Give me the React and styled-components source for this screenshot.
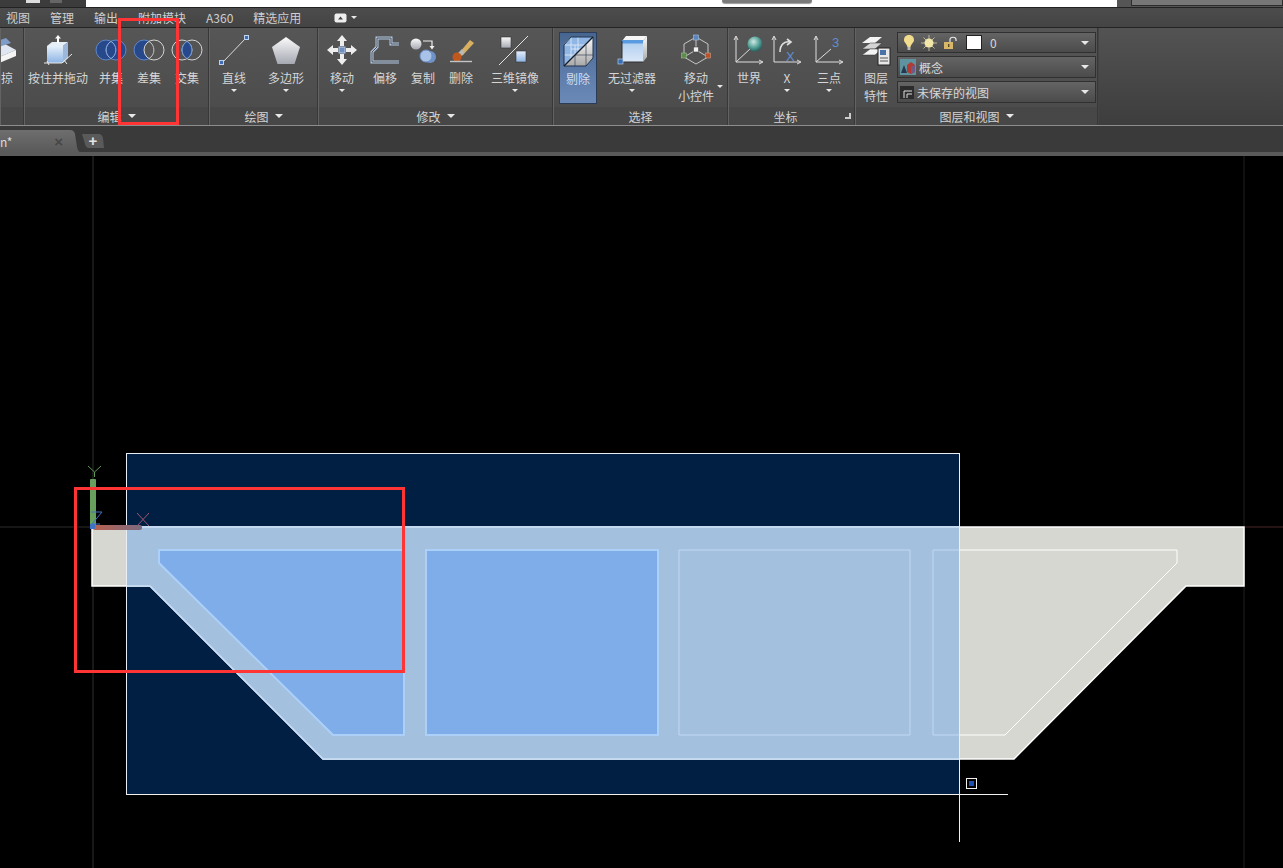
import React from "react";
import styled, { createGlobalStyle } from "styled-components";

const GlobalStyle = createGlobalStyle`
  html, body {
    margin: 0;
    padding: 0;
    background: #000;
  }
  body {
    font-family: "Noto Sans CJK SC", "Liberation Sans", sans-serif;
    font-size: 12px;
    color: #d8d8d8;
  }
`;

const Page = styled.div`
  position: relative;
  display: flex;
  flex-direction: column;
  width: 1283px;
  height: 868px;
  overflow: hidden;
`;

const TitleBar = styled.div`
  display: flex;
  height: 7px;
  background: #3c3c3c;
  border-bottom: 1px solid #222;
`;

const TitleStub = styled.div`
  width: 86px;
  display: flex;
  gap: 10px;
  padding-left: 26px;
  box-sizing: border-box;
`;

const StubBlock = styled.div`
  width: ${(p) => p.$w}px;
  height: 3px;
  background: ${(p) => p.$c};
`;

const TitleWhite = styled.div`
  width: 1031px;
  background: #fff;
  position: relative;
`;

const SearchTab = styled.div`
  position: absolute;
  left: 636px;
  top: 0;
  width: 90px;
  height: 3px;
  background: #7a7a7a;
  border-radius: 0 0 5px 5px;
  box-shadow: 0 1px 1px #999;
`;

const TitleRight = styled.div`
  flex: 1;
  padding-left: 14px;
  background: #555;
`;

const SearchBox = styled.div`
  height: 5px;
  background: #777;
  border: 1px solid #2c2c2c;
  border-top: 0;
`;

const MenuBar = styled.div`
  display: flex;
  align-items: center;
  gap: 20px;
  height: 19px;
  padding-left: 6px;
  background: linear-gradient(#4c4c4c, #444);
  border-bottom: 1px solid #242424;
  color: #cfcfcf;
  white-space: nowrap;
`;

const MenuItem = styled.span`
  line-height: 19px;
`;

const MenuExtra = styled.span`
  display: flex;
  align-items: center;
  gap: 4px;
  margin-left: 13px;
`;

const Ribbon = styled.div`
  display: flex;
  height: 97px;
  background: linear-gradient(#535353, #3d3d3d);
`;

const Panel = styled.section`
  display: flex;
  flex-direction: column;
  width: ${(p) => p.$w}px;
  flex: none;
  overflow: hidden;
  background: linear-gradient(#565656, #4a4a4a);
  border-right: 1px solid #383838;
  border-left: 1px solid #636363;
  box-sizing: border-box;
`;

const PanelBody = styled.div`
  display: flex;
  height: 79px;
  margin-left: -1px;
  padding-left: ${(p) => p.$pad || 0}px;
`;

const PanelTitle = styled.div`
  position: relative;
  display: flex;
  align-items: center;
  justify-content: center;
  gap: 6px;
  height: 18px;
  padding-right: ${(p) => p.$right || 0}px;
  background: #474747;
  color: #d4d4d4;
  white-space: nowrap;
`;

const Launcher = styled.span`
  position: absolute;
  right: 3px;
  top: 6px;
  width: 6px;
  height: 6px;
  border-right: 2px solid #ccc;
  border-bottom: 2px solid #ccc;
  box-sizing: border-box;
`;

const Tool = styled.div`
  flex: none;
  position: relative;
  display: flex;
  flex-direction: column;
  align-items: center;
  width: ${(p) => p.$w}px;
  margin-left: ${(p) => p.$shift || 0}px;
  padding-top: 6px;
  box-sizing: border-box;
  color: #d6d6d6;
  white-space: nowrap;
`;

const ActiveTool = styled(Tool)`
  margin-top: 4px;
  height: 72px;
  padding-top: 2px;
  background: linear-gradient(#47668f, #5c7ba8 55%, #6c8ab8);
  border: 1px solid #2c3c58;
  color: #cfdcf0;
`;

const IconBox = styled.div`
  height: 32px;
  width: 34px;
  display: flex;
  align-items: center;
  justify-content: center;
  flex: none;
`;

const ToolLabel = styled.div`
  height: 18px;
  line-height: 18px;
  margin-top: 3px;
`;

const ToolLabelSecond = styled.div`
  height: 18px;
  line-height: 18px;
`;

const Caret = styled.span`
  display: block;
  flex: none;
  width: 0;
  height: 0;
  border-left: ${(p) => p.$size || 3}px solid transparent;
  border-right: ${(p) => p.$size || 3}px solid transparent;
  border-top: ${(p) => p.$size || 3}px solid #e8e8e8;
  margin-top: ${(p) => p.$top || 0}px;
`;

const SideCaret = styled(Caret)`
  position: absolute;
  right: 2px;
  top: 57px;
`;

const RibbonRest = styled.div`
  flex: 1;
  border-left: 1px solid #444;
`;

const LayerStack = styled.div`
  display: flex;
  flex-direction: column;
  gap: 3px;
  width: 199px;
  padding-top: 4px;
`;

const LayerRow = styled.div`
  display: flex;
  align-items: center;
  gap: ${(p) => p.$gap || 3}px;
  padding: 0 6px 0 ${(p) => p.$pad || 2}px;
  background: linear-gradient(#646464, #4b4b4b);
  border: 1px solid #303030;
  color: #d8d8d8;
  height: ${(p) => p.$h || 20}px;
`;

const RowText = styled.span`
  flex: 1;
  white-space: nowrap;
`;

const Swatch = styled.span`
  width: 14px;
  height: 13px;
  background: #fff;
  border: 1px solid #222;
  margin-left: 2px;
  margin-right: 2px;
`;

const TabBar = styled.div`
  display: flex;
  align-items: flex-end;
  height: 26px;
  background: #3a3a3a;
  border-top: 1px solid #8d8d8d;
`;

const DocTab = styled.div`
  display: flex;
  align-items: center;
  justify-content: space-between;
  width: 80px;
  height: 22px;
  padding-right: 17px;
  box-sizing: border-box;
  background: linear-gradient(#6e6e6e, #5a5a5a);
  clip-path: path("M0 0 L70 0 Q74 0 75 4 L77 17 Q78 22 80 22 L0 22 Z");
  color: #dcdcdc;
`;

const TabClose = styled.span`
  color: #474747;
  font-family: "Liberation Sans", sans-serif;
  font-size: 15px;
  font-weight: bold;
  line-height: 1;
`;

const NewTab = styled.div`
  width: 22px;
  height: 14px;
  margin: 0 0 4px 2px;
  background: #5a5a5a;
  clip-path: path("M0 0 L17 0 Q20 0 21 4 L22 14 L7 14 Q4 14 3 10 Z");
  color: #e4e4e4;
  font-family: "Liberation Sans", sans-serif;
  font-size: 15px;
  font-weight: bold;
  line-height: 14px;
  text-align: center;
`;

const TabFoot = styled.div`
  height: 4px;
  background: #5a5a5a;
`;

const Canvas = styled.div`
  flex: 1;
  background: #000;
`;

const CanvasSvg = styled.svg`
  display: block;
`;

const Defs = styled.svg`
  position: absolute;
  width: 0;
  height: 0;
`;

const Callout = styled.div`
  position: absolute;
  left: ${(p) => p.$x}px;
  top: ${(p) => p.$y}px;
  width: ${(p) => p.$w}px;
  height: ${(p) => p.$h}px;
  border: 3px solid #ff3535;
  box-sizing: border-box;
  pointer-events: none;
`;

const GradientDefs = () => (
  <Defs aria-hidden="true">
    <defs>
      <linearGradient id="paleBlue" x1="0" y1="0" x2="0" y2="1">
        <stop offset="0" stopColor="#e6f0fb" />
        <stop offset="1" stopColor="#8db4e4" />
      </linearGradient>
      <linearGradient id="blueDown" x1="0" y1="0" x2="0" y2="1">
        <stop offset="0" stopColor="#aecdf0" />
        <stop offset="1" stopColor="#dbe8f7" />
      </linearGradient>
      <linearGradient id="whiteGrey" x1="0" y1="0" x2="0" y2="1">
        <stop offset="0" stopColor="#fbfbfb" />
        <stop offset="1" stopColor="#a6a8b2" />
      </linearGradient>
      <linearGradient id="sideGrey" x1="0" y1="0" x2="0" y2="1">
        <stop offset="0" stopColor="#fafafa" />
        <stop offset="1" stopColor="#a8a8a8" />
      </linearGradient>
      <linearGradient id="xAxis" x1="0" y1="0" x2="1" y2="0">
        <stop offset="0" stopColor="#b8604e" />
        <stop offset="1" stopColor="#7c6c80" />
      </linearGradient>
      <radialGradient id="globe" cx="0.4" cy="0.35" r="0.7">
        <stop offset="0" stopColor="#cfe9e6" />
        <stop offset="0.6" stopColor="#4f9c92" />
        <stop offset="1" stopColor="#22565a" />
      </radialGradient>
    </defs>
  </Defs>
);

const Icon = ({ w = 32, h = 32, children }) => (
  <svg width={w} height={h} viewBox={`0 0 ${w} ${h}`}>
    {children}
  </svg>
);

const SweepIcon = () => (
  <Icon>
    <path d="M3 16 L20 10 L31 16 L14 23 Z" fill="#dfe6f2" />
    <path d="M3 16 L14 23 L14 29 L3 22 Z" fill="#8ea6cc" />
    <path d="M14 23 L31 16 L31 22 L14 29 Z" fill="#f4f4f4" />
    <path d="M9 8 L21 4 L26 9 L14 13 Z" fill="#7f9bc8" />
  </Icon>
);

const PressPullIcon = () => (
  <Icon w={30}>
    <path d="M4 12 L20 12 L20 29 L4 29 Z" fill="url(#paleBlue)" />
    <path d="M4 12 L9 8 L25 8 L20 12 Z" fill="#e6eef8" />
    <path d="M20 12 L25 8 L25 24 L20 29 Z" fill="#9db7da" />
    <path d="M15 9 L15 3" stroke="#fff" strokeWidth="2" />
    <path d="M12 4.5 L15 1 L18 4.5 Z" fill="#fff" />
    <path d="M1 29 L19 29 L29 20 M4 27 L6 31 M21 26 L24 30" stroke="#e8e8e8" strokeWidth="1" fill="none" />
  </Icon>
);

const UnionIcon = () => (
  <Icon w={32} h={24}>
    <circle cx="11" cy="12" r="10" fill="#27498c" stroke="#5c86c8" />
    <circle cx="21" cy="12" r="10" fill="#27498c" stroke="#5c86c8" />
    <path d="M16 3.4 A10 10 0 0 1 16 20.6 A10 10 0 0 1 16 3.4 Z" fill="#27498c" stroke="#8fb0e0" />
  </Icon>
);

const SubtractIcon = () => (
  <Icon w={32} h={24}>
    <circle cx="11" cy="12" r="10" fill="#27498c" stroke="#5c86c8" />
    <circle cx="21" cy="12" r="10" fill="#555" stroke="#d4d4d4" />
    <path d="M16 3.4 A10 10 0 0 1 16 20.6" fill="none" stroke="#c4c4c4" />
  </Icon>
);

const IntersectIcon = () => (
  <Icon w={32} h={24}>
    <circle cx="11" cy="12" r="10" fill="none" stroke="#d4d4d4" />
    <circle cx="21" cy="12" r="10" fill="none" stroke="#d4d4d4" />
    <path d="M16 3.4 A10 10 0 0 1 16 20.6 A10 10 0 0 1 16 3.4 Z" fill="#27498c" stroke="#6f96d4" />
  </Icon>
);

const LineIcon = () => (
  <Icon>
    <path d="M4 29 L28 4" stroke="#dcdcdc" strokeWidth="1" />
    <rect x="1.5" y="26.5" width="4" height="4" fill="#3f6db4" stroke="#bcd2f0" />
    <rect x="26.5" y="1.5" width="4" height="4" fill="#3f6db4" stroke="#bcd2f0" />
  </Icon>
);

const PolygonIcon = () => (
  <Icon>
    <path d="M16 3 L30 13 L24.5 30 L7.5 30 L2 13 Z" fill="url(#whiteGrey)" />
  </Icon>
);

const MoveIcon = () => (
  <Icon>
    <path
      d="M16 1 L21 7 L18 7 L18 12 L14 12 L14 7 L11 7 Z M16 31 L21 25 L18 25 L18 20 L14 20 L14 25 L11 25 Z M1 16 L7 11 L7 14 L12 14 L12 18 L7 18 L7 21 Z M31 16 L25 11 L25 14 L20 14 L20 18 L25 18 L25 21 Z"
      fill="#eeeeee"
    />
    <rect x="13" y="13" width="6" height="6" fill="#6f8fc0" stroke="#b9cbe6" />
  </Icon>
);

const OFFSET_PATH = "M30 28 L3 28 L3 18 L8 13 L8 4 L22 4 L22 10 L30 10";

const OffsetIcon = () => (
  <Icon>
    <path d={OFFSET_PATH} fill="none" stroke="#b4cae8" strokeWidth="3" />
    <path d={OFFSET_PATH} fill="none" stroke="#525252" strokeWidth="1" />
  </Icon>
);

const CopyIcon = () => (
  <Icon>
    <circle cx="9" cy="10" r="5.5" fill="url(#whiteGrey)" />
    <circle cx="23" cy="23" r="6" fill="#6f92c8" />
    <circle cx="19" cy="22" r="6" fill="#a9c3e8" stroke="#6f92c8" />
    <path d="M16 7 L25 7 L25 14" fill="none" stroke="#f0f0f0" strokeWidth="1.2" />
    <path d="M22.5 12 L27.5 12 L25 15.5 Z" fill="#f0f0f0" />
  </Icon>
);

const EraseIcon = () => (
  <Icon>
    <path d="M25 6 L29 9 L18 21 L15 18 Z" fill="#d8b060" />
    <path d="M17 15 L20 18 L17 22 L13 19 Z" fill="#b8b8b0" />
    <circle cx="12" cy="23" r="4.5" fill="#c0581e" />
    <path d="M5 27.5 L27 27.5" stroke="#c4c4c4" strokeWidth="1.4" />
  </Icon>
);

const MirrorIcon = () => (
  <Icon>
    <rect x="2" y="3" width="10" height="11" fill="url(#whiteGrey)" stroke="#333" strokeWidth="0.6" />
    <path d="M0 31 L29 2" stroke="#e2e2e2" strokeWidth="1" />
    <rect x="17" y="17" width="10" height="11" fill="url(#paleBlue)" stroke="#333" strokeWidth="0.6" />
  </Icon>
);

const CullIcon = () => (
  <Icon>
    <path d="M2 10 L9 2 L31 2 L31 23 L24 31 L2 31 Z" fill="#8fb6e4" />
    <path d="M31 2 L31 23 L24 31 L2 31 Z" fill="url(#sideGrey)" />
    <path
      d="M2 10 L24 10 L31 2 M2 20 L14 20 M9 2 L9 24 M16 2 L16 17 M13 10 L13 20 M9 14 L24 14 M2 10 L9 2"
      fill="none"
      stroke="#e4edf8"
      strokeWidth="0.8"
    />
    <path d="M24 10 L24 31 M13 20 L13 31 M13 20 L31 20" fill="none" stroke="#3c4656" strokeWidth="0.7" />
    <path d="M2 10 L9 2 L31 2 L31 23 L24 31 L2 31 Z" fill="none" stroke="#22344e" />
    <path d="M2 31 L31 2" stroke="#141c28" strokeWidth="1.2" />
  </Icon>
);

const FilterIcon = () => (
  <Icon>
    <path d="M6 7 L27 7 L27 28 L6 28 Z" fill="url(#blueDown)" />
    <path d="M6 7 L10 2 L31 2 L27 7 Z" fill="#f6f6f6" />
    <path d="M27 7 L31 2 L31 23 L27 28 Z" fill="url(#sideGrey)" />
    <rect x="6" y="6" width="21" height="3.5" fill="#5a9ae0" />
    <path d="M6 28 L6 7" stroke="#2e2e2e" />
    <path d="M6 28 L27 28" stroke="#2e2e2e" />
    <rect x="2" y="25" width="5" height="5" fill="#3a6cb0" stroke="#c4d6ee" strokeWidth="0.6" />
  </Icon>
);

const GizmoIcon = () => (
  <Icon>
    <path d="M16 3 L28 10 L28 23 L16 30 L4 23 L4 10 Z" fill="none" stroke="#c6c6c6" />
    <path d="M16 3 L16 16 L4 23 M16 16 L28 23" fill="none" stroke="#c6c6c6" />
    <rect x="13.5" y="1" width="5" height="5" fill="#5b86bd" stroke="#a8c0de" strokeWidth="0.6" />
    <rect x="13.5" y="13" width="5" height="5" fill="#f2f2f2" stroke="#444" strokeWidth="0.6" />
    <rect x="1.5" y="19" width="5" height="5" fill="#5e8c4e" stroke="#9abf8c" strokeWidth="0.6" />
    <rect x="25.5" y="19" width="5" height="5" fill="#b5532e" stroke="#d29a80" strokeWidth="0.6" />
  </Icon>
);

const Axes = () => (
  <path
    d="M3 28 L3 3 M1 6 L3 2 L5 6 M3 28 L29 28 M26 26 L30 28 L26 30"
    fill="none"
    stroke="#dedede"
    strokeWidth="1"
  />
);

const WorldIcon = () => (
  <Icon>
    <Axes />
    <path d="M3 28 L18 14" stroke="#dedede" />
    <circle cx="22" cy="10" r="7.5" fill="url(#globe)" />
  </Icon>
);

const AxisXIcon = () => (
  <Icon>
    <Axes />
    <path d="M9 18 C9 10 14 7 19 8 M16 5 L20 8 L16 11" fill="none" stroke="#dedede" strokeWidth="1.6" />
    <text x="15" y="27" fill="#5f8fd6" fontSize="13" fontFamily="Liberation Sans, sans-serif">
      X
    </text>
  </Icon>
);

const ThreePointIcon = () => (
  <Icon>
    <Axes />
    <path d="M3 28 L18 15" stroke="#dedede" />
    <text x="19" y="13" fill="#5f8fd6" fontSize="13" fontFamily="Liberation Sans, sans-serif">
      3
    </text>
  </Icon>
);

const LayersIcon = () => (
  <Icon>
    <path d="M2 9 L10 3 L22 3 L15 9 Z" fill="#f4f4f4" />
    <path d="M2 15 L10 9 L22 9 L15 15 Z" fill="#d4d4d4" stroke="#333" strokeWidth="0.5" />
    <path d="M2 21 L10 15 L22 15 L15 21 Z" fill="#f4f4f4" stroke="#333" strokeWidth="0.5" />
    <rect x="18" y="14" width="12" height="17" fill="#e8e8e8" stroke="#222" />
    <rect x="20" y="16" width="6" height="5" fill="#4a72aa" />
    <path d="M20 24 L28 24 M20 27 L28 27" stroke="#555" />
  </Icon>
);

const BulbIcon = () => (
  <Icon w={12} h={17}>
    <path d="M6 1 C9.5 1 11 3.5 11 6 C11 8.5 8 10 7.5 13 L4.5 13 C4 10 1 8.5 1 6 C1 3.5 2.5 1 6 1 Z" fill="#f0dc8c" />
    <rect x="4.5" y="13" width="3" height="3" fill="#b8b8b8" />
  </Icon>
);

const SunIcon = () => (
  <Icon w={16} h={16}>
    <path d="M8 0 L8 16 M0 8 L16 8 M2.5 2.5 L13.5 13.5 M13.5 2.5 L2.5 13.5" stroke="#d8d0a8" strokeWidth="0.8" />
    <circle cx="8" cy="8" r="4.5" fill="#f2e6a8" />
  </Icon>
);

const LockIcon = () => (
  <Icon w={15} h={14}>
    <path d="M7 6 L7 3.5 C7 0.5 13 0.5 13 3.5 L13 5" fill="none" stroke="#e8e8e8" strokeWidth="1.2" />
    <rect x="1" y="6" width="9" height="7" fill="#d8b66a" />
    <rect x="5" y="8" width="1.4" height="3" fill="#5a4a20" />
  </Icon>
);

const StyleIcon = () => (
  <Icon w={16} h={16}>
    <rect width="16" height="16" fill="#5f93a0" />
    <path d="M1 14 L4 6 L7 14 Z" fill="#27384e" />
    <path d="M7 6 L11 3 L15 6 L15 13 L11 15 L7 13 Z" fill="#b23a34" />
    <path d="M11 8 L15 6 L15 13 L11 15 Z" fill="#6d5a86" />
  </Icon>
);

const ViewIcon = () => (
  <Icon w={14} h={13}>
    <rect width="14" height="13" fill="#2c2c2c" />
    <path d="M4 12 L4 5 L12 5 M7 12 L7 8 L12 8" fill="none" stroke="#e0e0e0" />
  </Icon>
);

const TabletIcon = () => (
  <svg width="13" height="10" viewBox="0 0 13 10">
    <rect x="0.5" y="0.5" width="12" height="9" rx="2" fill="#eee" />
    <path d="M4 6.5 L6.5 3.5 L9 6.5 Z" fill="#444" />
  </svg>
);

const Ucs = () => (
  <g>
    <path d="M88 466 L94.5 472 L101 466 M94.5 472 L94.5 477" fill="none" stroke="#5f9a55" />
    <rect x="90" y="479" width="6" height="48" rx="1" fill="#679f5c" />
    <rect x="93" y="525" width="49" height="5" rx="2" fill="url(#xAxis)" />
    <path d="M137 513 L149 526 M149 513 L137 526" stroke="#a0566e" />
    <path d="M91 512 L102 512 L92 524 L100 524" fill="none" stroke="#3f72c4" />
    <rect x="90" y="524" width="5" height="5" fill="#3f72c4" />
  </g>
);

const OUTER = "92,527 1244,527 1244,586 1186,586 1014,759 323,759 150,586 92,586";
const HOLE_A = "159,550 404,550 404,735 333,735 159,563";
const HOLE_B = "426,550 658,550 658,735 426,735";
const HOLE_C = "679,550 910,550 910,735 679,735";
const HOLE_D = "933,550 1177,550 1177,563 1005,735 933,735";

const Drawing = () => (
  <CanvasSvg width="1283" height="712" viewBox="0 156 1283 712">
    <defs>
      <clipPath id="inWindow">
        <rect x="127" y="454" width="832" height="340" />
      </clipPath>
      <filter id="soft" x="-5%" y="-5%" width="110%" height="110%">
        <feGaussianBlur stdDeviation="0.7" />
      </filter>
    </defs>
    <path d="M93 156 L93 868" stroke="#2c332c" />
    <path d="M1244 156 L1244 868" stroke="#1f1f1f" />
    <path d="M0 527 L92 527" stroke="#2c2c2c" />
    <path d="M1244 527 L1283 527" stroke="#4a2626" />

    <rect x="126.5" y="453.5" width="833" height="341" fill="#001f43" />

    <polygon points={OUTER} fill="#d6d7d0" stroke="#fff" strokeWidth="1.5" />
    <polygon points={HOLE_D} fill="none" stroke="#fff" />

    <g clipPath="url(#inWindow)">
      <polygon points={OUTER} fill="#a3c0df" stroke="#cbe0f8" strokeWidth="1.5" />
      <polygon points={HOLE_A} fill="#7fadea" stroke="#acd0f8" strokeWidth="2" filter="url(#soft)" />
      <polygon points={HOLE_B} fill="#7fadea" stroke="#acd0f8" strokeWidth="2" filter="url(#soft)" />
      <polygon points={HOLE_C} fill="none" stroke="#c0d8f2" />
      <polygon points={HOLE_D} fill="none" stroke="#c0d8f2" />
    </g>

    <rect x="126.5" y="453.5" width="833" height="341" fill="none" stroke="#e8eef5" />
    <path d="M959.5 453 L959.5 842 M126 794.5 L1008 794.5" stroke="#f0f0f0" />
    <rect x="966.5" y="778.5" width="10" height="10" fill="#000" stroke="#f0f0f0" />
    <rect x="969" y="781" width="5" height="5" fill="#1c4fb0" />
    <Ucs />
  </CanvasSvg>
);

const ToolButton = ({ w, icon, label, second, caret, side, shift }) => (
  <Tool $w={w} $shift={shift}>
    <IconBox>{icon}</IconBox>
    <ToolLabel>{label}</ToolLabel>
    {second && <ToolLabelSecond>{second}</ToolLabelSecond>}
    {caret && <Caret $top={2} />}
    {side && <SideCaret />}
  </Tool>
);

const MENU = ["视图", "管理", "输出", "附加模块", "A360", "精选应用"];

export default function App() {
  return (
    <Page>
      <GlobalStyle />
      <GradientDefs />
      <TitleBar>
        <TitleStub>
          <StubBlock $w={14} $c="#ddd" />
          <StubBlock $w={12} $c="#666" />
        </TitleStub>
        <TitleWhite>
          <SearchTab />
        </TitleWhite>
        <TitleRight>
          <SearchBox />
        </TitleRight>
      </TitleBar>
      <MenuBar>
        {MENU.map((m) => (
          <MenuItem key={m}>{m}</MenuItem>
        ))}
        <MenuExtra>
          <TabletIcon />
          <Caret />
        </MenuExtra>
      </MenuBar>

      <Ribbon>
        <Panel $w={24}>
          <PanelBody>
            <ToolButton w={38} shift={-18} icon={<SweepIcon />} label="扫掠" />
          </PanelBody>
          <PanelTitle />
        </Panel>
        <Panel $w={185}>
          <PanelBody>
            <ToolButton w={68} icon={<PressPullIcon />} label="按住并拖动" />
            <ToolButton w={38} icon={<UnionIcon />} label="并集" />
            <ToolButton w={38} icon={<SubtractIcon />} label="差集" />
            <ToolButton w={38} icon={<IntersectIcon />} label="交集" />
          </PanelBody>
          <PanelTitle>
            编辑
            <Caret $size={4} />
          </PanelTitle>
        </Panel>
        <Panel $w={109}>
          <PanelBody>
            <ToolButton w={50} icon={<LineIcon />} label="直线" caret />
            <ToolButton w={54} icon={<PolygonIcon />} label="多边形" caret />
          </PanelBody>
          <PanelTitle>
            绘图
            <Caret $size={4} />
          </PanelTitle>
        </Panel>
        <Panel $w={235}>
          <PanelBody>
            <ToolButton w={48} icon={<MoveIcon />} label="移动" caret />
            <ToolButton w={38} icon={<OffsetIcon />} label="偏移" />
            <ToolButton w={38} icon={<CopyIcon />} label="复制" />
            <ToolButton w={38} icon={<EraseIcon />} label="删除" />
            <ToolButton w={70} icon={<MirrorIcon />} label="三维镜像" caret />
          </PanelBody>
          <PanelTitle>
            修改
            <Caret $size={4} />
          </PanelTitle>
        </Panel>
        <Panel $w={175}>
          <PanelBody $pad={6}>
            <ActiveTool $w={38}>
              <IconBox>
                <CullIcon />
              </IconBox>
              <ToolLabel>剔除</ToolLabel>
            </ActiveTool>
            <ToolButton w={70} icon={<FilterIcon />} label="无过滤器" caret />
            <ToolButton w={58} icon={<GizmoIcon />} label="移动" second="小控件" side />
          </PanelBody>
          <PanelTitle>选择</PanelTitle>
        </Panel>
        <Panel $w={127}>
          <PanelBody>
            <ToolButton w={42} icon={<WorldIcon />} label="世界" />
            <ToolButton w={34} icon={<AxisXIcon />} label="X" caret />
            <ToolButton w={50} icon={<ThreePointIcon />} label="三点" caret />
          </PanelBody>
          <PanelTitle $right={12}>
            坐标
            <Launcher />
          </PanelTitle>
        </Panel>
        <Panel $w={243}>
          <PanelBody>
            <ToolButton w={42} icon={<LayersIcon />} label="图层" second="特性" />
            <LayerStack>
              <LayerRow $gap={6} $pad={5} $h={19}>
                <BulbIcon />
                <SunIcon />
                <LockIcon />
                <Swatch />
                <RowText>0</RowText>
                <Caret $size={4} />
              </LayerRow>
              <LayerRow>
                <StyleIcon />
                <RowText>概念</RowText>
                <Caret $size={4} />
              </LayerRow>
              <LayerRow>
                <ViewIcon />
                <RowText>未保存的视图</RowText>
                <Caret $size={4} />
              </LayerRow>
            </LayerStack>
          </PanelBody>
          <PanelTitle>
            图层和视图
            <Caret $size={4} />
          </PanelTitle>
        </Panel>
        <RibbonRest />
      </Ribbon>

      <TabBar>
        <DocTab>
          <span>n*</span>
          <TabClose>×</TabClose>
        </DocTab>
        <NewTab>+</NewTab>
      </TabBar>
      <TabFoot />
      <Canvas>
        <Drawing />
      </Canvas>

      <Callout $x={118} $y={18} $w={61} $h={107} />
      <Callout $x={74} $y={487} $w={331} $h={186} />
    </Page>
  );
}
